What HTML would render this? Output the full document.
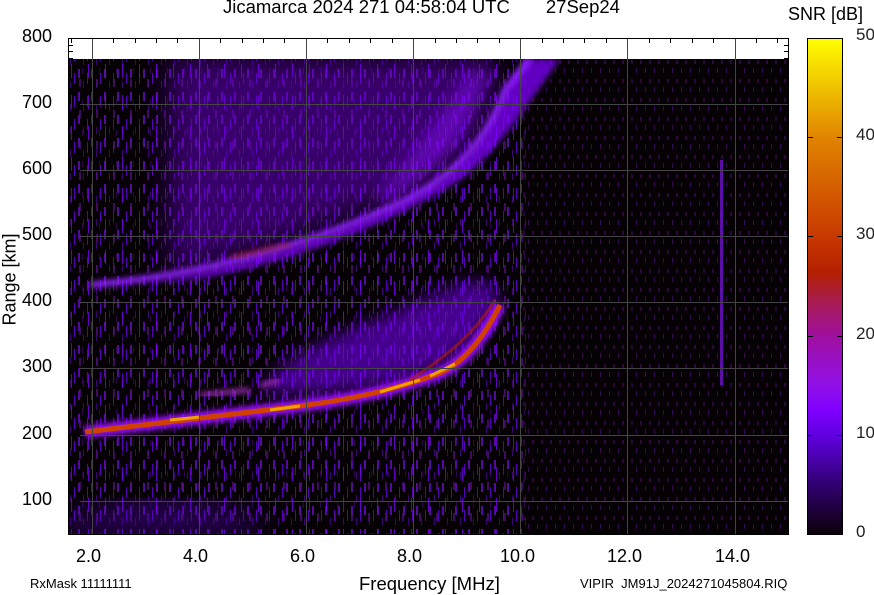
<!DOCTYPE html>
<html><head><meta charset="utf-8"><style>
html,body{margin:0;padding:0;background:#fff;width:874px;height:595px;overflow:hidden;font-family:"Liberation Sans",sans-serif;}
.t{position:absolute;color:#000;white-space:nowrap;}
</style></head><body>
<div style="position:relative;width:874px;height:595px;">
<svg width="874" height="595" style="position:absolute;left:0;top:0">
<defs>
<filter id="b3"><feGaussianBlur stdDeviation="3"/></filter>
<filter id="b8"><feGaussianBlur stdDeviation="8"/></filter>
<filter id="b14"><feGaussianBlur stdDeviation="14"/></filter>
<pattern id="n1" width="13" height="23" patternUnits="userSpaceOnUse"><rect x="0" y="0" width="2" height="9" fill="#6a10d0"/><rect x="5" y="12" width="1" height="7" fill="#4a0890"/><rect x="9" y="4" width="1" height="11" fill="#7000f0"/></pattern>
<pattern id="n2" width="17" height="31" patternUnits="userSpaceOnUse"><rect x="3" y="2" width="1" height="14" fill="#8000ff"/><rect x="11" y="17" width="2" height="8" fill="#50107a"/><rect x="14" y="6" width="1" height="6" fill="#3a0860"/></pattern>
<pattern id="n3" width="9" height="19" patternUnits="userSpaceOnUse"><rect x="1" y="3" width="2" height="4" fill="#2a0838"/><rect x="6" y="11" width="1" height="5" fill="#340a50"/></pattern>
<linearGradient id="cb" x1="0" y1="0" x2="0" y2="1">
<stop offset="0" stop-color="#ffff00"/><stop offset="0.2" stop-color="#e08400"/><stop offset="0.4" stop-color="#c83800"/><stop offset="0.47" stop-color="#b42000"/><stop offset="0.53" stop-color="#a81c50"/><stop offset="0.6" stop-color="#a010a0"/><stop offset="0.7" stop-color="#9010e8"/><stop offset="0.75" stop-color="#8000ff"/><stop offset="0.8" stop-color="#6000e0"/><stop offset="0.9" stop-color="#300070"/><stop offset="1" stop-color="#0c0008"/>
</linearGradient>
<clipPath id="pc"><rect x="68" y="59" width="721" height="476"/></clipPath>
</defs>
<rect x="68" y="38" width="721" height="497" fill="#fff"/>
<g clip-path="url(#pc)">
<rect x="68" y="59" width="721" height="476" fill="#060105"/>
<rect x="68" y="59" width="460" height="476" fill="url(#n1)" opacity="0.75"/>
<rect x="68" y="59" width="460" height="476" fill="url(#n2)" opacity="0.75"/>
<rect x="520" y="59" width="269" height="476" fill="url(#n3)"/>
<!-- diffuse F region above upper trace -->
<path d="M170,270 C260,250 380,210 470,150 L495,80 L495,59 L170,59 Z" fill="#6a00d0" opacity="0.5" filter="url(#b14)"/>
<path d="M380,210 C430,180 470,140 490,70 L470,70 C440,120 410,160 380,190Z" fill="#8a10ff" opacity="0.5" filter="url(#b8)"/>
<path d="M90,288 C200,280 300,250 400,205 C450,180 485,150 505,90 L525,59 L560,59 C530,100 500,150 460,180 C380,230 280,265 200,278 Z" fill="#8000ff" opacity="0.75" filter="url(#b3)"/>
<path d="M90,285 C200,275 300,248 400,203 C450,178 485,145 505,90 L530,59" stroke="#9020ff" stroke-width="6" fill="none" filter="url(#b3)"/>
<path d="M230,258 L290,244" stroke="#c03000" stroke-width="3" fill="none" opacity="0.7" filter="url(#b3)"/>
<!-- diffuse above lower trace -->
<path d="M260,390 C300,340 360,330 420,300 C470,280 490,270 500,300 C480,340 450,370 400,380 C340,392 300,398 260,390 Z" fill="#7000e8" opacity="0.6" filter="url(#b8)"/>
<path d="M60,520 C120,500 180,490 260,520 L260,535 L60,535Z" fill="#5000b0" opacity="0.5" filter="url(#b14)"/>
<path d="M85,432 C150,424 220,416 300,406 C360,398 400,388 440,373 C460,364 480,345 500,305" stroke="#9a10ff" stroke-width="12" fill="none" filter="url(#b3)"/>
<path d="M85,432 C150,424 220,416 300,406 C360,398 400,388 440,373 C460,364 480,345 500,305" stroke="#d04000" stroke-width="5" fill="none"/>
<path d="M170,420 L200,417 M270,410 L300,406 M380,392 L420,380 M430,376 L455,364" stroke="#f0a000" stroke-width="3" fill="none"/>
<path d="M200,395 L250,390 M260,386 L280,380" stroke="#b030d0" stroke-width="4" fill="none" filter="url(#b3)"/>
<path d="M410,380 C440,360 470,340 495,300" stroke="#b02000" stroke-width="3" fill="none" opacity="0.6"/>
<rect x="720" y="160" width="3" height="225" fill="#7010d0" opacity="0.8"/>
</g>
<g stroke="#444" stroke-width="1">
<line x1="92.5" y1="38" x2="92.5" y2="535"/><line x1="199.5" y1="38" x2="199.5" y2="535"/><line x1="306.5" y1="38" x2="306.5" y2="535"/><line x1="413.5" y1="38" x2="413.5" y2="535"/><line x1="520.5" y1="38" x2="520.5" y2="535"/><line x1="627.5" y1="38" x2="627.5" y2="535"/><line x1="735.5" y1="38" x2="735.5" y2="535"/>
<line x1="80" y1="104.5" x2="789" y2="104.5"/><line x1="80" y1="170.5" x2="789" y2="170.5"/><line x1="80" y1="236.5" x2="789" y2="236.5"/><line x1="80" y1="302.5" x2="789" y2="302.5"/><line x1="80" y1="368.5" x2="789" y2="368.5"/><line x1="80" y1="435.5" x2="789" y2="435.5"/><line x1="80" y1="501.5" x2="789" y2="501.5"/>
</g>
<g stroke="#000" stroke-width="1">
<path d="M113.5,38v5M135.5,38v5M156.5,38v5M177.5,38v5M220.5,38v5M242.5,38v5M263.5,38v5M284.5,38v5M327.5,38v5M349.5,38v5M370.5,38v5M392.5,38v5M435.5,38v5M456.5,38v5M477.5,38v5M499.5,38v5M542.5,38v5M563.5,38v5M584.5,38v5M606.5,38v5M649.5,38v5M670.5,38v5M692.5,38v5M713.5,38v5M756.5,38v5M777.5,38v5M71.5,38v5"/>
<path d="M68,45.5h5M68,51.5h5M68,58.5h5M784,45.5h5M784,51.5h5M784,58.5h5"/>
</g>
<rect x="68.5" y="38.5" width="720" height="496" fill="none" stroke="#000"/>
<rect x="807.5" y="38.5" width="35" height="496" fill="url(#cb)" stroke="#000"/>
<path d="M807,137.5h6M837,137.5h6M807,236.5h6M837,236.5h6M807,336.5h6M837,336.5h6M807,435.5h6M837,435.5h6" stroke="#000"/>
</svg>
<div class="t" style="left:223px;top:-4px;font-size:18.5px">Jicamarca 2024 271 04:58:04 UTC&nbsp;&nbsp;&nbsp;&nbsp;&nbsp;&nbsp;&nbsp;27Sep24</div>
<div class="t" style="left:788px;top:4px;font-size:18px">SNR [dB]</div>
<div class="t" style="left:22px;top:26px;font-size:18px">800</div>
<div class="t" style="left:22px;top:92px;font-size:18px">700</div>
<div class="t" style="left:22px;top:158px;font-size:18px">600</div>
<div class="t" style="left:22px;top:224px;font-size:18px">500</div>
<div class="t" style="left:22px;top:290px;font-size:18px">400</div>
<div class="t" style="left:22px;top:356px;font-size:18px">300</div>
<div class="t" style="left:22px;top:423px;font-size:18px">200</div>
<div class="t" style="left:22px;top:489px;font-size:18px">100</div>
<div class="t" style="left:-28px;top:277px;font-size:18px;transform:rotate(-90deg);transform-origin:center;width:76px;text-align:center">Range [km]</div>
<div class="t" style="left:76px;top:546px;font-size:18px">2.0</div>
<div class="t" style="left:183px;top:546px;font-size:18px">4.0</div>
<div class="t" style="left:290px;top:546px;font-size:18px">6.0</div>
<div class="t" style="left:397px;top:546px;font-size:18px">8.0</div>
<div class="t" style="left:500px;top:546px;font-size:18px">10.0</div>
<div class="t" style="left:607px;top:546px;font-size:18px">12.0</div>
<div class="t" style="left:715px;top:546px;font-size:18px">14.0</div>
<div class="t" style="left:359px;top:573px;font-size:18.5px">Frequency [MHz]</div>
<div class="t" style="left:30px;top:576px;font-size:13px">RxMask 11111111</div>
<div class="t" style="left:580px;top:576px;font-size:13px">VIPIR&nbsp; JM91J_2024271045804.RIQ</div>
<div class="t" style="left:856px;top:25px;font-size:17px;color:#222">50</div>
<div class="t" style="left:856px;top:125px;font-size:17px;color:#222">40</div>
<div class="t" style="left:856px;top:224px;font-size:17px;color:#222">30</div>
<div class="t" style="left:856px;top:324px;font-size:17px;color:#222">20</div>
<div class="t" style="left:856px;top:423px;font-size:17px;color:#222">10</div>
<div class="t" style="left:856px;top:522px;font-size:17px;color:#222">0</div>
</div>
</body></html>
